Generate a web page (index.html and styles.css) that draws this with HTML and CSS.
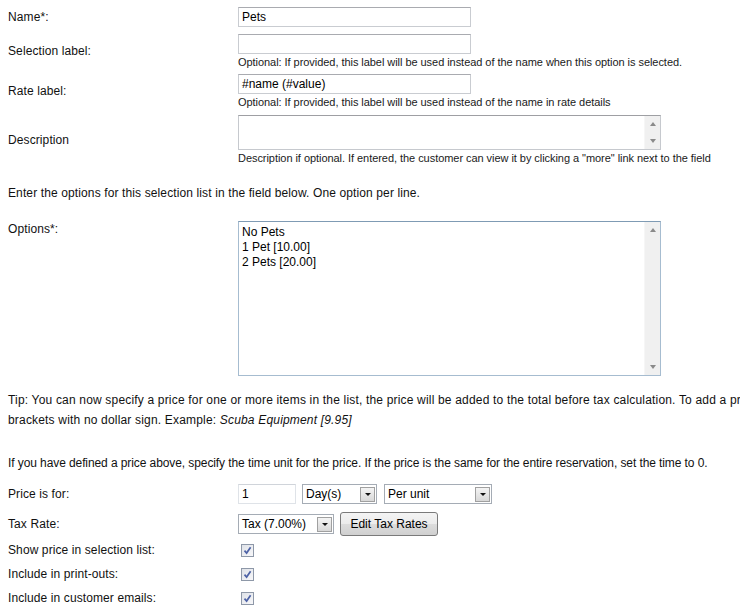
FILE: index.html
```html
<!DOCTYPE html>
<html>
<head>
<meta charset="utf-8">
<link rel="stylesheet" href="styles.css">
</head>
<body>
<div class="form">
  <div class="row r-name">
    <div class="label">Name*:</div>
    <div class="field"><div class="input wide">Pets</div></div>
  </div>
  <div class="row r-sel">
    <div class="label">Selection label:</div>
    <div class="field">
      <div class="input wide"></div>
      <div class="help">Optional: If provided, this label will be used instead of the name when this option is selected.</div>
    </div>
  </div>
  <div class="row r-rate">
    <div class="label">Rate label:</div>
    <div class="field">
      <div class="input wide">#name (#value)</div>
      <div class="help">Optional: If provided, this label will be used instead of the name in rate details</div>
    </div>
  </div>
  <div class="row r-desc">
    <div class="label">Description</div>
    <div class="field">
      <div class="textarea desc">
        <div class="ta-body"></div>
        <div class="scroll"><span class="up"></span><span class="down"></span></div>
      </div>
      <div class="help">Description if optional. If entered, the customer can view it by clicking a "more" link next to the field</div>
    </div>
  </div>

  <p class="intro">Enter the options for this selection list in the field below. One option per line.</p>

  <div class="row top r-opts">
    <div class="label">Options*:</div>
    <div class="field">
      <div class="textarea opts">
        <div class="ta-body">No Pets<br>1 Pet [10.00]<br>2 Pets [20.00]</div>
        <div class="scroll"><span class="up"></span><span class="down"></span></div>
      </div>
    </div>
  </div>

  <p class="tip">Tip: You can now specify a price for one or more items in the list, the price will be added to the total before tax calculation. To add a price, enter it in square<br>brackets with no dollar sign. Example: <em>Scuba Equipment [9.95]</em></p>

  <p class="unit-note">If you have defined a price above, specify the time unit for the price. If the price is the same for the entire reservation, set the time to 0.</p>

  <div class="row r-price">
    <div class="label">Price is for:</div>
    <div class="field inline">
      <div class="input num">1</div>
      <div class="select day"><span class="sv">Day(s)</span><span class="arrow"></span></div>
      <div class="select per"><span class="sv">Per unit</span><span class="arrow"></span></div>
    </div>
  </div>
  <div class="row r-tax">
    <div class="label">Tax Rate:</div>
    <div class="field inline">
      <div class="select tax"><span class="sv">Tax (7.00%)</span><span class="arrow"></span></div>
      <button class="btn">Edit Tax Rates</button>
    </div>
  </div>
  <div class="row r-check">
    <div class="label">Show price in selection list:</div>
    <div class="field"><span class="check"><svg width="9" height="9" viewBox="0 0 9 9"><path d="M1.5 4.6 L3.6 7 L7.6 1.2" fill="none" stroke="#4d62a6" stroke-width="1.7"/></svg></span></div>
  </div>
  <div class="row r-check">
    <div class="label">Include in print-outs:</div>
    <div class="field"><span class="check"><svg width="9" height="9" viewBox="0 0 9 9"><path d="M1.5 4.6 L3.6 7 L7.6 1.2" fill="none" stroke="#4d62a6" stroke-width="1.7"/></svg></span></div>
  </div>
  <div class="row r-check">
    <div class="label">Include in customer emails:</div>
    <div class="field"><span class="check"><svg width="9" height="9" viewBox="0 0 9 9"><path d="M1.5 4.6 L3.6 7 L7.6 1.2" fill="none" stroke="#4d62a6" stroke-width="1.7"/></svg></span></div>
  </div>
</div>
</body>
</html>
```

FILE: styles.css
```css
html, body {
  margin: 0;
  padding: 0;
  background: #fff;
  overflow: hidden;
}
.form {
  font-family: "Liberation Sans", Arial, sans-serif;
  font-size: 12px;
  color: #111;
  padding: 7px 0 0 8px;
  width: 1100px;
}
.row {
  display: flex;
  align-items: center;
}
.row.top {
  align-items: flex-start;
}
.label {
  width: 230px;
  flex: none;
  line-height: 14px;
  letter-spacing: 0.1px;
}
.field {
  display: flex;
  flex-direction: column;
}
.field.inline {
  flex-direction: row;
  align-items: center;
}
.r-sel { margin-top: 7px; }
.r-rate { margin-top: 6px; }
.r-desc { margin-top: 7px; }

.input {
  box-sizing: border-box;
  height: 20px;
  border: 1px solid #c9ccd1;
  border-top-color: #a9abb0;
  background: #fff;
  font-size: 12px;
  line-height: 18px;
  padding: 0 3px;
  color: #000;
}
.input.wide { width: 233px; }
.input.num {
  width: 58px;
  border-color: #dfe3e8;
  border-top-color: #d0d4da;
}
.help {
  font-size: 11px;
  line-height: 12px;
  margin-top: 2px;
  white-space: nowrap;
  color: #1a1a1a;
  letter-spacing: -0.05px;
}

.textarea {
  box-sizing: border-box;
  width: 423px;
  display: flex;
  background: #fff;
}
.textarea.desc {
  height: 35px;
  border: 1px solid #c6c9ce;
  border-top-color: #9e9fa3;
}
.textarea.opts {
  height: 155px;
  border: 1px solid #a6bcd0;
  border-top-color: #7f9bb4;
}
.ta-body {
  flex: 1;
  padding: 3px 3px;
  font-size: 12px;
  line-height: 15px;
  color: #000;
}
.scroll {
  width: 16px;
  flex: none;
  background: #f0f0f0;
  border-left: 1px solid #f6f6f6;
  display: flex;
  flex-direction: column;
  justify-content: space-between;
  align-items: center;
  padding: 6px 0 6px;
  box-sizing: border-box;
}
.scroll .up {
  width: 0;
  height: 0;
  border-left: 3.5px solid transparent;
  border-right: 3.5px solid transparent;
  border-bottom: 4px solid #8a8a8a;
}
.scroll .down {
  width: 0;
  height: 0;
  border-left: 3.5px solid transparent;
  border-right: 3.5px solid transparent;
  border-top: 4px solid #8a8a8a;
}

.intro {
  margin: 22px 0 0;
  line-height: 14px;
  white-space: nowrap;
  letter-spacing: 0.12px;
}
.r-opts { margin-top: 21px; }
.r-opts .label { padding-top: 1px; }

.tip {
  margin: 14px 0 0;
  line-height: 20px;
  white-space: nowrap;
  letter-spacing: 0.18px;
}
.unit-note {
  margin: 23px 0 0;
  line-height: 20px;
  white-space: nowrap;
  letter-spacing: -0.09px;
}

.r-price { margin-top: 11px; }
.select {
  box-sizing: border-box;
  height: 20px;
  border: 1px solid #a5acb5;
  background: #fff;
  display: flex;
  align-items: center;
  justify-content: space-between;
  padding: 0 1px 0 3px;
  margin-left: 6px;
}
.select:first-child { margin-left: 0; }
.select.day { width: 75px; margin-left: 6px; }
.select.per { width: 108px; margin-left: 7px; }
.select.tax { width: 96px; }
.sv {
  font-size: 12px;
  color: #000;
  white-space: nowrap;
}
.arrow {
  width: 15px;
  height: 15px;
  box-sizing: border-box;
  border: 1px solid #a0a0a0;
  background: linear-gradient(#f4f4f4, #d8d8d8);
  position: relative;
  flex: none;
}
.arrow::after {
  content: "";
  position: absolute;
  left: 3.5px;
  top: 5.5px;
  border-left: 3.5px solid transparent;
  border-right: 3.5px solid transparent;
  border-top: 3.5px solid #111;
}
.r-tax { margin-top: 8px; }
.btn {
  margin-left: 6px;
  height: 24px;
  width: 98px;
  box-sizing: border-box;
  border: 1px solid #7a7a7a;
  border-radius: 3px;
  background: linear-gradient(#f4f4f4 0%, #ebebeb 50%, #dcdcdc 51%, #d0d0d0 100%);
  font-family: "Liberation Sans", Arial, sans-serif;
  font-size: 12px;
  color: #000;
  padding: 0;
}
.r-check {
  height: 24px;
}
.r-tax + .r-check { margin-top: 2px; }
.check {
  box-sizing: border-box;
  display: flex;
  align-items: center;
  justify-content: center;
  width: 13px;
  height: 13px;
  margin-left: 3px;
  border: 1px solid #8e98a8;
  background: linear-gradient(135deg, #dfe2e8, #f7f7f9);
}
```
